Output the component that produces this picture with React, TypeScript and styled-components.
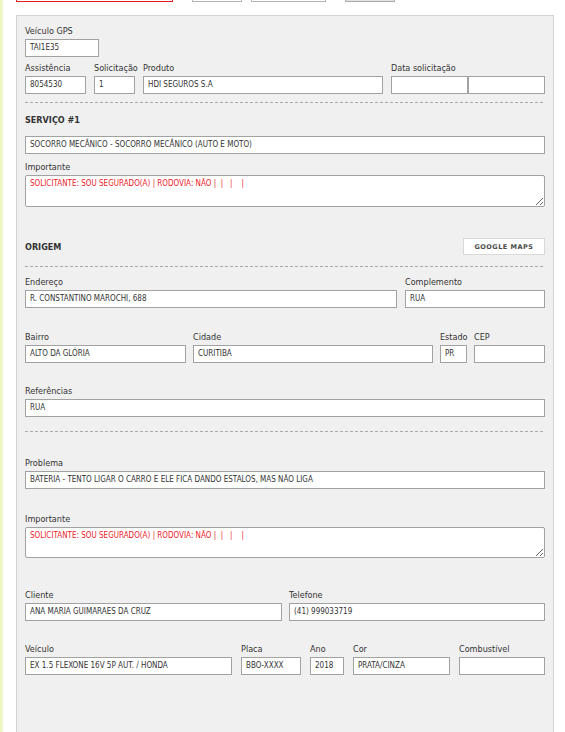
import React from "react";
import styled, { createGlobalStyle } from "styled-components";

const FONT = `"DejaVu Sans Condensed", "Liberation Sans Narrow", "Liberation Sans", Arial, sans-serif`;

const GlobalStyle = createGlobalStyle`
  html, body { margin: 0; padding: 0; overflow: hidden; background: #ffffff; }
  body { font-family: ${FONT}; }
  * { box-sizing: border-box; }
`;

const Page = styled.div`
  display: flex;
  min-height: 100vh;
`;

const Strip = styled.div`
  flex: none;
  width: 3px;
  background: #eef6c6;
`;

const Main = styled.div`
  flex: 1;
  padding-left: 13px;
`;

const TopBar = styled.div`
  display: flex;
  align-items: flex-end;
  height: 2px;
  overflow: hidden;
`;

type BoxVariant = "red" | "plain" | "button";

const TopBox = styled.div<{ $w: number; $ml: number; $variant: BoxVariant }>`
  flex: none;
  width: ${(p) => p.$w}px;
  margin-left: ${(p) => p.$ml}px;
  height: 20px;
  border: 1px solid
    ${(p) => (p.$variant === "red" ? "#e41e1e" : p.$variant === "button" ? "#adadad" : "#b5b5b5")};
  background: ${(p) => (p.$variant === "button" ? "#e1e1e1" : "#ffffff")};
`;

const Panel = styled.div`
  margin-top: 13px;
  width: 538px;
  background: #f0f0f0;
  border: 1px solid #d3d3d3;
  border-bottom: none;
  padding: 9px 8px 120px;
  display: flex;
  flex-direction: column;
`;

const Row = styled.div<{ $cols: string; $gap?: number; $mt?: number }>`
  display: grid;
  grid-template-columns: ${(p) => p.$cols};
  column-gap: ${(p) => p.$gap ?? 8}px;
  margin-top: ${(p) => p.$mt ?? 0}px;
`;

const FieldBox = styled.div`
  display: flex;
  flex-direction: column;
  min-width: 0;
`;

const Label = styled.label`
  font-size: 9px;
  line-height: 12px;
  height: 12px;
  color: #333;
  margin-bottom: 2px;
  white-space: nowrap;
`;

const ValueBox = styled.div`
  flex: none;
  width: 100%;
  height: 18px;
  border: 1px solid #a2a2a2;
  background: #ffffff;
  padding: 0 4px;
  display: flex;
  align-items: center;
  font-size: 8px;
  line-height: 12px;
  color: #333;
  white-space: nowrap;
  overflow: hidden;
`;

const Pair = styled.div`
  display: flex;
  & > ${ValueBox} {
    flex: 1 1 0;
  }
`;

const TextArea = styled.textarea<{ $h: number }>`
  width: 100%;
  height: ${(p) => p.$h}px;
  border: 1px solid #a2a2a2;
  border-radius: 2px;
  background: #ffffff;
  padding: 2px 4px;
  margin: 0;
  font-family: ${FONT};
  font-size: 8px;
  line-height: 11px;
  color: #ee1b2a;
  resize: vertical;
  outline: none;
  display: block;
  white-space: pre;
`;

const Title = styled.div<{ $mt?: number }>`
  font-size: 9px;
  line-height: 12px;
  font-weight: bold;
  color: #333;
  margin-top: ${(p) => p.$mt ?? 0}px;
`;

const Header = styled.div<{ $mt: number }>`
  display: flex;
  justify-content: space-between;
  align-items: center;
  margin-top: ${(p) => p.$mt}px;
`;

const MapsButton = styled.button`
  width: 82px;
  height: 17px;
  border: 1px solid #d9d9d9;
  background: #ffffff;
  padding: 0;
  font-family: "DejaVu Sans", "Liberation Sans", Arial, sans-serif;
  font-weight: bold;
  font-size: 6.5px;
  letter-spacing: 0.5px;
  color: #4a4a4a;
`;

const Divider = styled.div<{ $mt: number }>`
  height: 1px;
  margin-top: ${(p) => p.$mt}px;
  background: repeating-linear-gradient(to right, #a9a9a9 0 3px, transparent 3px 5px);
`;

const Field: React.FC<{ label?: string; value?: string }> = ({ label, value = "" }) => (
  <FieldBox>
    {label !== undefined && <Label>{label}</Label>}
    <ValueBox role="textbox" aria-readonly="true">{value}</ValueBox>
  </FieldBox>
);

const AreaField: React.FC<{ label: string; value: string; h: number }> = ({ label, value, h }) => (
  <FieldBox>
    <Label>{label}</Label>
    <TextArea readOnly value={value} $h={h} />
  </FieldBox>
);

const IMPORTANT = "SOLICITANTE: SOU SEGURADO(A) | RODOVIA: NÃO |  |   |    |";

export default function App() {
  return (
    <>
      <GlobalStyle />
      <Page>
        <Strip />
        <Main>
          <TopBar>
            <TopBox $variant="red" $w={157} $ml={0} />
            <TopBox $variant="plain" $w={50} $ml={19} />
            <TopBox $variant="plain" $w={75} $ml={9} />
            <TopBox $variant="button" $w={50} $ml={19} />
          </TopBar>
          <Panel>
            <Row $cols="74px">
              <Field label="Veículo GPS" value="TAI1E35" />
            </Row>
            <Row $cols="61px 41px 240px 154px" $mt={5}>
              <Field label="Assistência" value="8054530" />
              <Field label="Solicitação" value="1" />
              <Field label="Produto" value="HDI SEGUROS S.A" />
              <FieldBox>
                <Label>Data solicitação</Label>
                <Pair>
                  <ValueBox role="textbox" aria-readonly="true" />
                  <ValueBox role="textbox" aria-readonly="true" />
                </Pair>
              </FieldBox>
            </Row>
            <Divider $mt={8} />
            <Title $mt={11}>SERVIÇO #1</Title>
            <Row $cols="1fr" $mt={10}>
              <Field value="SOCORRO MECÂNICO - SOCORRO MECÂNICO (AUTO E MOTO)" />
            </Row>
            <Row $cols="1fr" $mt={7}>
              <AreaField label="Importante" value={IMPORTANT} h={32} />
            </Row>
            <Header $mt={31}>
              <Title>ORIGEM</Title>
              <MapsButton type="button">GOOGLE MAPS</MapsButton>
            </Header>
            <Divider $mt={11} />
            <Row $cols="372px 1fr" $mt={9}>
              <Field label="Endereço" value="R. CONSTANTINO MAROCHI, 688" />
              <Field label="Complemento" value="RUA" />
            </Row>
            <Row $cols="161px 240px 27px 71px" $gap={7} $mt={23}>
              <Field label="Bairro" value="ALTO DA GLÓRIA" />
              <Field label="Cidade" value="CURITIBA" />
              <Field label="Estado" value="PR" />
              <Field label="CEP" value="" />
            </Row>
            <Row $cols="1fr" $mt={22}>
              <Field label="Referências" value="RUA" />
            </Row>
            <Divider $mt={14} />
            <Row $cols="1fr" $mt={25}>
              <Field label="Problema" value="BATERIA - TENTO LIGAR O CARRO E ELE FICA DANDO ESTALOS, MAS NÃO LIGA" />
            </Row>
            <Row $cols="1fr" $mt={24}>
              <AreaField label="Importante" value={IMPORTANT} h={31} />
            </Row>
            <Row $cols="257px 1fr" $gap={7} $mt={31}>
              <Field label="Cliente" value="ANA MARIA GUIMARAES DA CRUZ" />
              <Field label="Telefone" value="(41) 999033719" />
            </Row>
            <Row $cols="207px 60px 34px 97px 1fr" $gap={9} $mt={22}>
              <Field label="Veículo" value="EX 1.5 FLEXONE 16V 5P AUT. / HONDA" />
              <Field label="Placa" value="BBO-XXXX" />
              <Field label="Ano" value="2018" />
              <Field label="Cor" value="PRATA/CINZA" />
              <Field label="Combustível" value="" />
            </Row>
          </Panel>
        </Main>
      </Page>
    </>
  );
}
